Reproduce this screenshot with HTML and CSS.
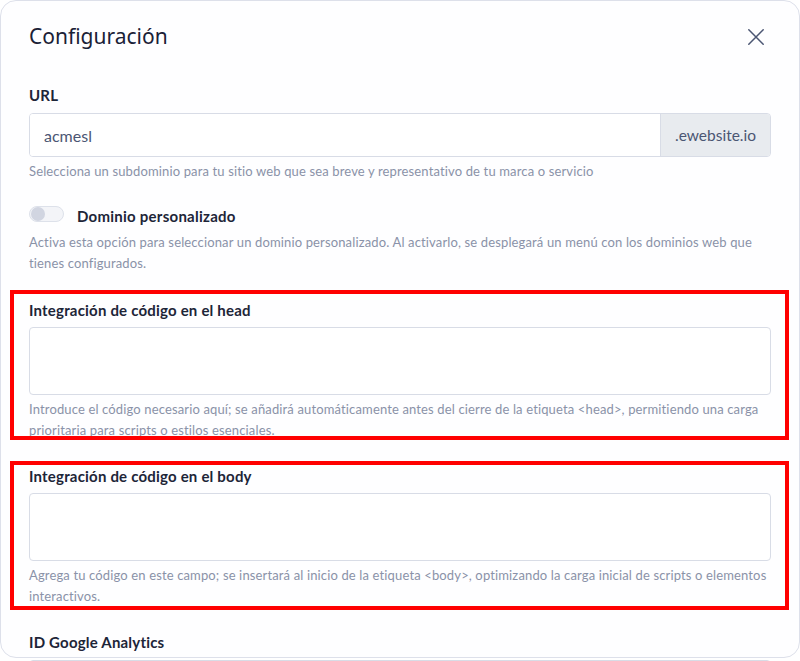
FILE: index.html
```html
<!DOCTYPE html>
<html lang="es">
<head>
<meta charset="utf-8">
<title>Configuración</title>
<link rel="stylesheet" href="styles.css">
</head>
<body>
<div class="card">
  <div class="header">
    <h1 class="title">Configuración</h1>
    <button class="close" aria-label="Cerrar">
      <svg width="16" height="16" viewBox="0 0 16 16"><path d="M0.8 0.8 L15.2 15.2 M15.2 0.8 L0.8 15.2" stroke="#4b5673" stroke-width="1.5" stroke-linecap="round" fill="none"/></svg>
    </button>
  </div>

  <div class="field field-url">
    <label class="label">URL</label>
    <div class="input-group">
      <div class="input">acmesl</div>
      <div class="addon">.ewebsite.io</div>
    </div>
    <p class="help">Selecciona un subdominio para tu sitio web que sea breve y representativo de tu marca o servicio</p>
  </div>

  <div class="field field-toggle">
    <div class="toggle-row">
      <span class="toggle"><span class="knob"></span></span>
      <span class="toggle-label">Dominio personalizado</span>
    </div>
    <p class="help help-toggle">Activa esta opción para seleccionar un dominio personalizado. Al activarlo, se desplegará un menú con los dominios web que tienes configurados.</p>
  </div>

  <div class="field field-head highlight highlight-head">
    <label class="label">Integración de código en el head</label>
    <div class="textarea"></div>
    <p class="help">Introduce el código necesario aquí; se añadirá automáticamente antes del cierre de la etiqueta &lt;head&gt;, permitiendo una carga prioritaria para scripts o estilos esenciales.</p>
  </div>

  <div class="field field-body highlight highlight-body">
    <label class="label">Integración de código en el body</label>
    <div class="textarea"></div>
    <p class="help">Agrega tu código en este campo; se insertará al inicio de la etiqueta &lt;body&gt;, optimizando la carga inicial de scripts o elementos interactivos.</p>
  </div>

  <div class="field field-ga">
    <label class="label">ID Google Analytics</label>
    <div class="input"></div>
  </div>
</div>
</body>
</html>
```

FILE: styles.css
```css
* { box-sizing: border-box; }

html, body {
  margin: 0;
  padding: 0;
  background: #ffffff;
  overflow: hidden;
  height: 661px;
}

body {
  font-family: "Lato", "Noto Sans", sans-serif;
  color: #1d2538;
}

.card {
  width: 800px;
  height: 658px;
  border: 1px solid #dde0ea;
  border-radius: 16px;
  background: #fefeff;
  padding: 20px 28px 0 28px;
  display: flex;
  flex-direction: column;
}

.header {
  display: flex;
  align-items: center;
  justify-content: space-between;
  height: 30px;
}

.title {
  margin: 0;
  font-family: "Noto Sans", sans-serif;
  font-size: 21px;
  font-weight: 400;
  line-height: 30px;
  color: #1a2136;
}

.close {
  border: 0;
  background: none;
  padding: 0;
  width: 16px;
  height: 16px;
  margin-right: 7px;
  margin-top: 1px;
  display: flex;
}

.field {
  display: flex;
  flex-direction: column;
}

.field-url { margin-top: 35px; }
.field-toggle { margin-top: 24px; }
.field-head { margin-top: 26px; }
.field-body { margin-top: 25px; }
.field-ga { margin-top: 25px; }

.label {
  font-size: 15px;
  font-weight: 700;
  line-height: 18px;
  padding-bottom: 2px;
  letter-spacing: 0.2px;
  color: #1d2538;
}

.input-group {
  display: flex;
  margin-top: 7px;
  height: 44px;
  border: 1px solid #d8dce6;
  border-radius: 4px;
  overflow: hidden;
}

.input-group .input {
  flex: 1;
  border: 0;
  margin: 0;
  height: auto;
  border-radius: 0;
}

.input {
  margin-top: 7px;
  height: 44px;
  border: 1px solid #d8dce6;
  border-radius: 4px;
  padding: 0 14px;
  display: flex;
  align-items: center;
  font-size: 16px;
  color: #4b5673;
  background: #fff;
}

.addon {
  width: 110px;
  background: #e8ebef;
  border-left: 1px solid #d8dce6;
  display: flex;
  align-items: center;
  justify-content: center;
  font-size: 15.5px;
  color: #4b5673;
}

.help {
  margin: 4px 0 0 0;
  font-size: 13px;
  line-height: 21.5px;
  letter-spacing: 0.14px;
  color: #8a92a8;
}

.help-toggle { margin-top: 5px; }

.toggle-row {
  display: flex;
  align-items: flex-start;
  height: 20px;
}

.toggle {
  width: 35px;
  height: 16px;
  border: 1px solid #dde1ea;
  background: #f3f4f8;
  border-radius: 999px;
  display: flex;
  align-items: center;
  padding-left: 1px;
  margin-top: -1px;
}

.knob {
  width: 14px;
  height: 14px;
  border-radius: 50%;
  background: #d1d5e1;
}

.toggle-label {
  margin-left: 13px;
  font-size: 15px;
  font-weight: 700;
  line-height: 18px;
  padding-bottom: 2px;
  letter-spacing: 0.25px;
  color: #1d2538;
}

.textarea {
  margin-top: 6px;
  height: 68px;
  border: 1px solid #d8dce6;
  border-radius: 4px;
  background: #fff;
}

.highlight { position: relative; }

.highlight::after {
  content: "";
  position: absolute;
  left: -19px;
  right: -18px;
  border: 4px solid #ff0000;
  pointer-events: none;
}

.highlight-head::after { top: -11px; bottom: 2px; }
.highlight-body::after { top: -6px; bottom: -2px; }
```
